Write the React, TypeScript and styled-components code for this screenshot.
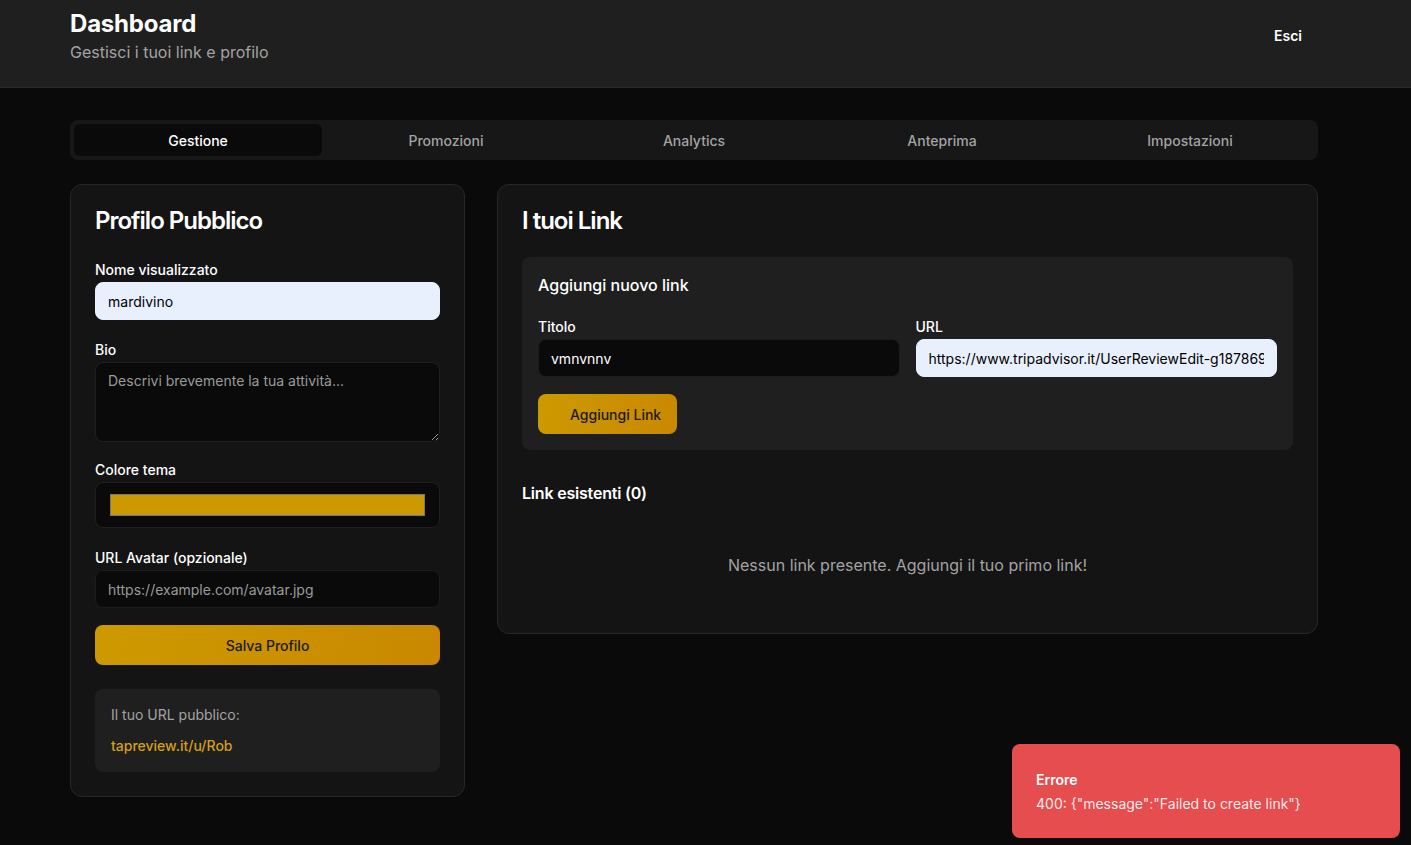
import React from 'react';
import styled, { createGlobalStyle } from 'styled-components';

const GlobalStyle = createGlobalStyle`
  * {
    box-sizing: border-box;
  }
  html, body {
    margin: 0;
    padding: 0;
    background: #0a0a0a;
    color: #fafafa;
    font-family: Inter, "Noto Sans", "Liberation Sans", sans-serif;
  }
`

const Page = styled.div`
  min-height: 100vh;
  background: #0a0a0a;
`

const Header = styled.header`
  background: #1f1f1f;
  border-bottom: 1px solid #2a2a2a;
  height: 88px;
`

const Container = styled.div`
  width: 1248px;
  margin-left: 70px;
`

const HeaderRow = styled(Container)`
  display: flex;
  justify-content: space-between;
  align-items: center;
  padding: 8px 0 22px;
`

const Title = styled.h1`
  margin: 0;
  font-size: 24px;
  line-height: 32px;
  font-weight: 700;
  letter-spacing: -0.2px;
  color: #fff;
`

const Subtitle = styled.p`
  margin: 0;
  font-size: 16px;
  line-height: 24px;
  color: #a3a3a3;
`

const GhostButton = styled.button`
  height: 40px;
  padding: 0 16px;
  margin-bottom: 2px;
  border: none;
  background: transparent;
  color: #fff;
  font-family: inherit;
  font-size: 14px;
  font-weight: 600;
`

const Main = styled(Container)`
  padding: 32px 0 40px;
`

const Tabs = styled.div`
  display: grid;
  grid-template-columns: repeat(5, 1fr);
  height: 40px;
  padding: 4px;
  background: #171717;
  border-radius: 8px;
`

const Tab = styled.button<{ $active?: boolean }>`
  border: none;
  border-radius: 6px;
  background: ${p => (p.$active ? '#0a0a0a' : 'transparent')};
  color: ${p => (p.$active ? '#fff' : '#a3a3a3')};
  font-family: inherit;
  font-size: 14px;
  font-weight: 500;
`

const Columns = styled.div`
  display: grid;
  grid-template-columns: 395px 1fr;
  gap: 32px;
  align-items: start;
  margin-top: 24px;
`

const Card = styled.section`
  background: #141414;
  border: 1px solid #272727;
  border-radius: 12px;
  padding: 24px;
`

const CardTitle = styled.h2`
  margin: 0 0 24px;
  font-size: 24px;
  line-height: 24px;
  font-weight: 600;
  letter-spacing: -1px;
  color: #fff;
`

const Form = styled.div`
  display: flex;
  flex-direction: column;
  padding-top: 3px;
`

const Field = styled.div<{ $gap?: number }>`
  display: flex;
  flex-direction: column;
  margin-bottom: ${p => p.$gap ?? 18}px;
`

const Label = styled.label`
  font-size: 14px;
  line-height: 20px;
  font-weight: 500;
  color: #fff;
  margin-bottom: 2px;
`

const Input = styled.input<{ $filled?: boolean }>`
  height: 38px;
  width: 100%;
  padding: 0 12px;
  border: 1px solid ${p => (p.$filled ? '#e8f0fe' : '#1c1c1c')};
  border-radius: 8px;
  background: ${p => (p.$filled ? '#e8f0fe' : '#0a0a0a')};
  color: ${p => (p.$filled ? '#000' : '#fff')};
  font-family: inherit;
  font-size: 14px;
  outline: none;
  &::placeholder {
    color: #9a9a9a;
  }
`

const TextArea = styled.textarea`
  height: 80px;
  width: 100%;
  padding: 8px 12px;
  border: 1px solid #1f1f1f;
  border-radius: 8px;
  background: #0a0a0a;
  color: #fff;
  font-family: inherit;
  font-size: 14px;
  line-height: 20px;
  outline: none;
  &::placeholder {
    color: #9a9a9a;
  }
`

const ColorField = styled.div`
  height: 46px;
  padding: 11px 14px;
  border: 1px solid #1f1f1f;
  border-radius: 8px;
  background: #0a0a0a;
`

const Swatch = styled.div<{ $color: string }>`
  height: 22px;
  background: ${p => p.$color};
  border: 1px solid #777;
`

const GoldButton = styled.button<{ $wide?: boolean }>`
  height: 40px;
  width: ${p => (p.$wide ? '100%' : 'auto')};
  padding: ${p => (p.$wide ? '0 16px' : '0 16px 0 32px')};
  align-self: flex-start;
  border: none;
  border-radius: 8px;
  background: linear-gradient(100deg, #cc9a00 0%, #c98800 100%);
  color: #1a1a1a;
  font-family: inherit;
  font-size: 14px;
  font-weight: 500;
`

const InfoBox = styled.div`
  margin-top: 24px;
  padding: 16px;
  background: #1f1f1f;
  border-radius: 8px;
  font-size: 14px;
  line-height: 20px;
`

const InfoText = styled.p`
  margin: 0 0 11px;
  color: #a3a3a3;
`

const PublicLink = styled.a`
  color: #d49f17;
  font-weight: 500;
  text-decoration: none;
`

const AddBox = styled.div`
  background: #1f1f1f;
  border-radius: 8px;
  padding: 16px;
`

const BoxTitle = styled.h3`
  margin: 0 0 20px;
  font-size: 16px;
  line-height: 24px;
  font-weight: 500;
  color: #fff;
`

const TwoCols = styled.div`
  display: grid;
  grid-template-columns: 1fr 1fr;
  gap: 16px;
  margin-bottom: 17px;
`

const SectionTitle = styled.h3`
  margin: 31px 0 16px;
  font-size: 16px;
  line-height: 24px;
  font-weight: 600;
  letter-spacing: -0.2px;
  color: #fff;
`

const Empty = styled.p`
  margin: 0;
  padding: 32px 0 32px;
  text-align: center;
  font-size: 16px;
  line-height: 24px;
  color: #a3a3a3;
`

const Toast = styled.div`
  position: fixed;
  right: 11px;
  bottom: 7px;
  width: 388px;
  padding: 26px 32px 24px 24px;
  background: #e54d4e;
  border-radius: 8px;
  font-size: 14px;
  line-height: 20px;
`

const ToastTitle = styled.div`
  font-weight: 600;
  color: #fff;
  margin-bottom: 4px;
`

const ToastText = styled.div`
  color: rgba(255, 255, 255, 0.9);
`

const tabs = ['Gestione', 'Promozioni', 'Analytics', 'Anteprima', 'Impostazioni'];

export default function App() {
  return (
    <Page>
      <GlobalStyle />
      <Header>
        <HeaderRow>
          <div>
            <Title>Dashboard</Title>
            <Subtitle>Gestisci i tuoi link e profilo</Subtitle>
          </div>
          <GhostButton>Esci</GhostButton>
        </HeaderRow>
      </Header>

      <Main>
        <Tabs>
          {tabs.map((t, i) => (
            <Tab key={t} $active={i === 0}>{t}</Tab>
          ))}
        </Tabs>

        <Columns>
          <Card>
            <CardTitle>Profilo Pubblico</CardTitle>
            <Form>
              <Field $gap={20}>
                <Label>Nome visualizzato</Label>
                <Input $filled defaultValue="mardivino" />
              </Field>
              <Field>
                <Label>Bio</Label>
                <TextArea placeholder="Descrivi brevemente la tua attività..." />
              </Field>
              <Field $gap={20}>
                <Label>Colore tema</Label>
                <ColorField>
                  <Swatch $color="#cc9a00" />
                </ColorField>
              </Field>
              <Field $gap={17}>
                <Label>URL Avatar (opzionale)</Label>
                <Input placeholder="https://example.com/avatar.jpg" />
              </Field>
              <GoldButton $wide>Salva Profilo</GoldButton>
              <InfoBox>
                <InfoText>Il tuo URL pubblico:</InfoText>
                <PublicLink href="#">tapreview.it/u/Rob</PublicLink>
              </InfoBox>
            </Form>
          </Card>

          <Card>
            <CardTitle>I tuoi Link</CardTitle>
            <AddBox>
              <BoxTitle>Aggiungi nuovo link</BoxTitle>
              <TwoCols>
                <Field $gap={0}>
                  <Label>Titolo</Label>
                  <Input defaultValue="vmnvnnv" />
                </Field>
                <Field $gap={0}>
                  <Label>URL</Label>
                  <Input $filled defaultValue="https://www.tripadvisor.it/UserReviewEdit-g187869-d1234567" />
                </Field>
              </TwoCols>
              <GoldButton>Aggiungi Link</GoldButton>
            </AddBox>
            <SectionTitle>Link esistenti (0)</SectionTitle>
            <Empty>Nessun link presente. Aggiungi il tuo primo link!</Empty>
          </Card>
        </Columns>
      </Main>

      <Toast>
        <ToastTitle>Errore</ToastTitle>
        <ToastText>400: {'{"message":"Failed to create link"}'}</ToastText>
      </Toast>
    </Page>
  );
}
